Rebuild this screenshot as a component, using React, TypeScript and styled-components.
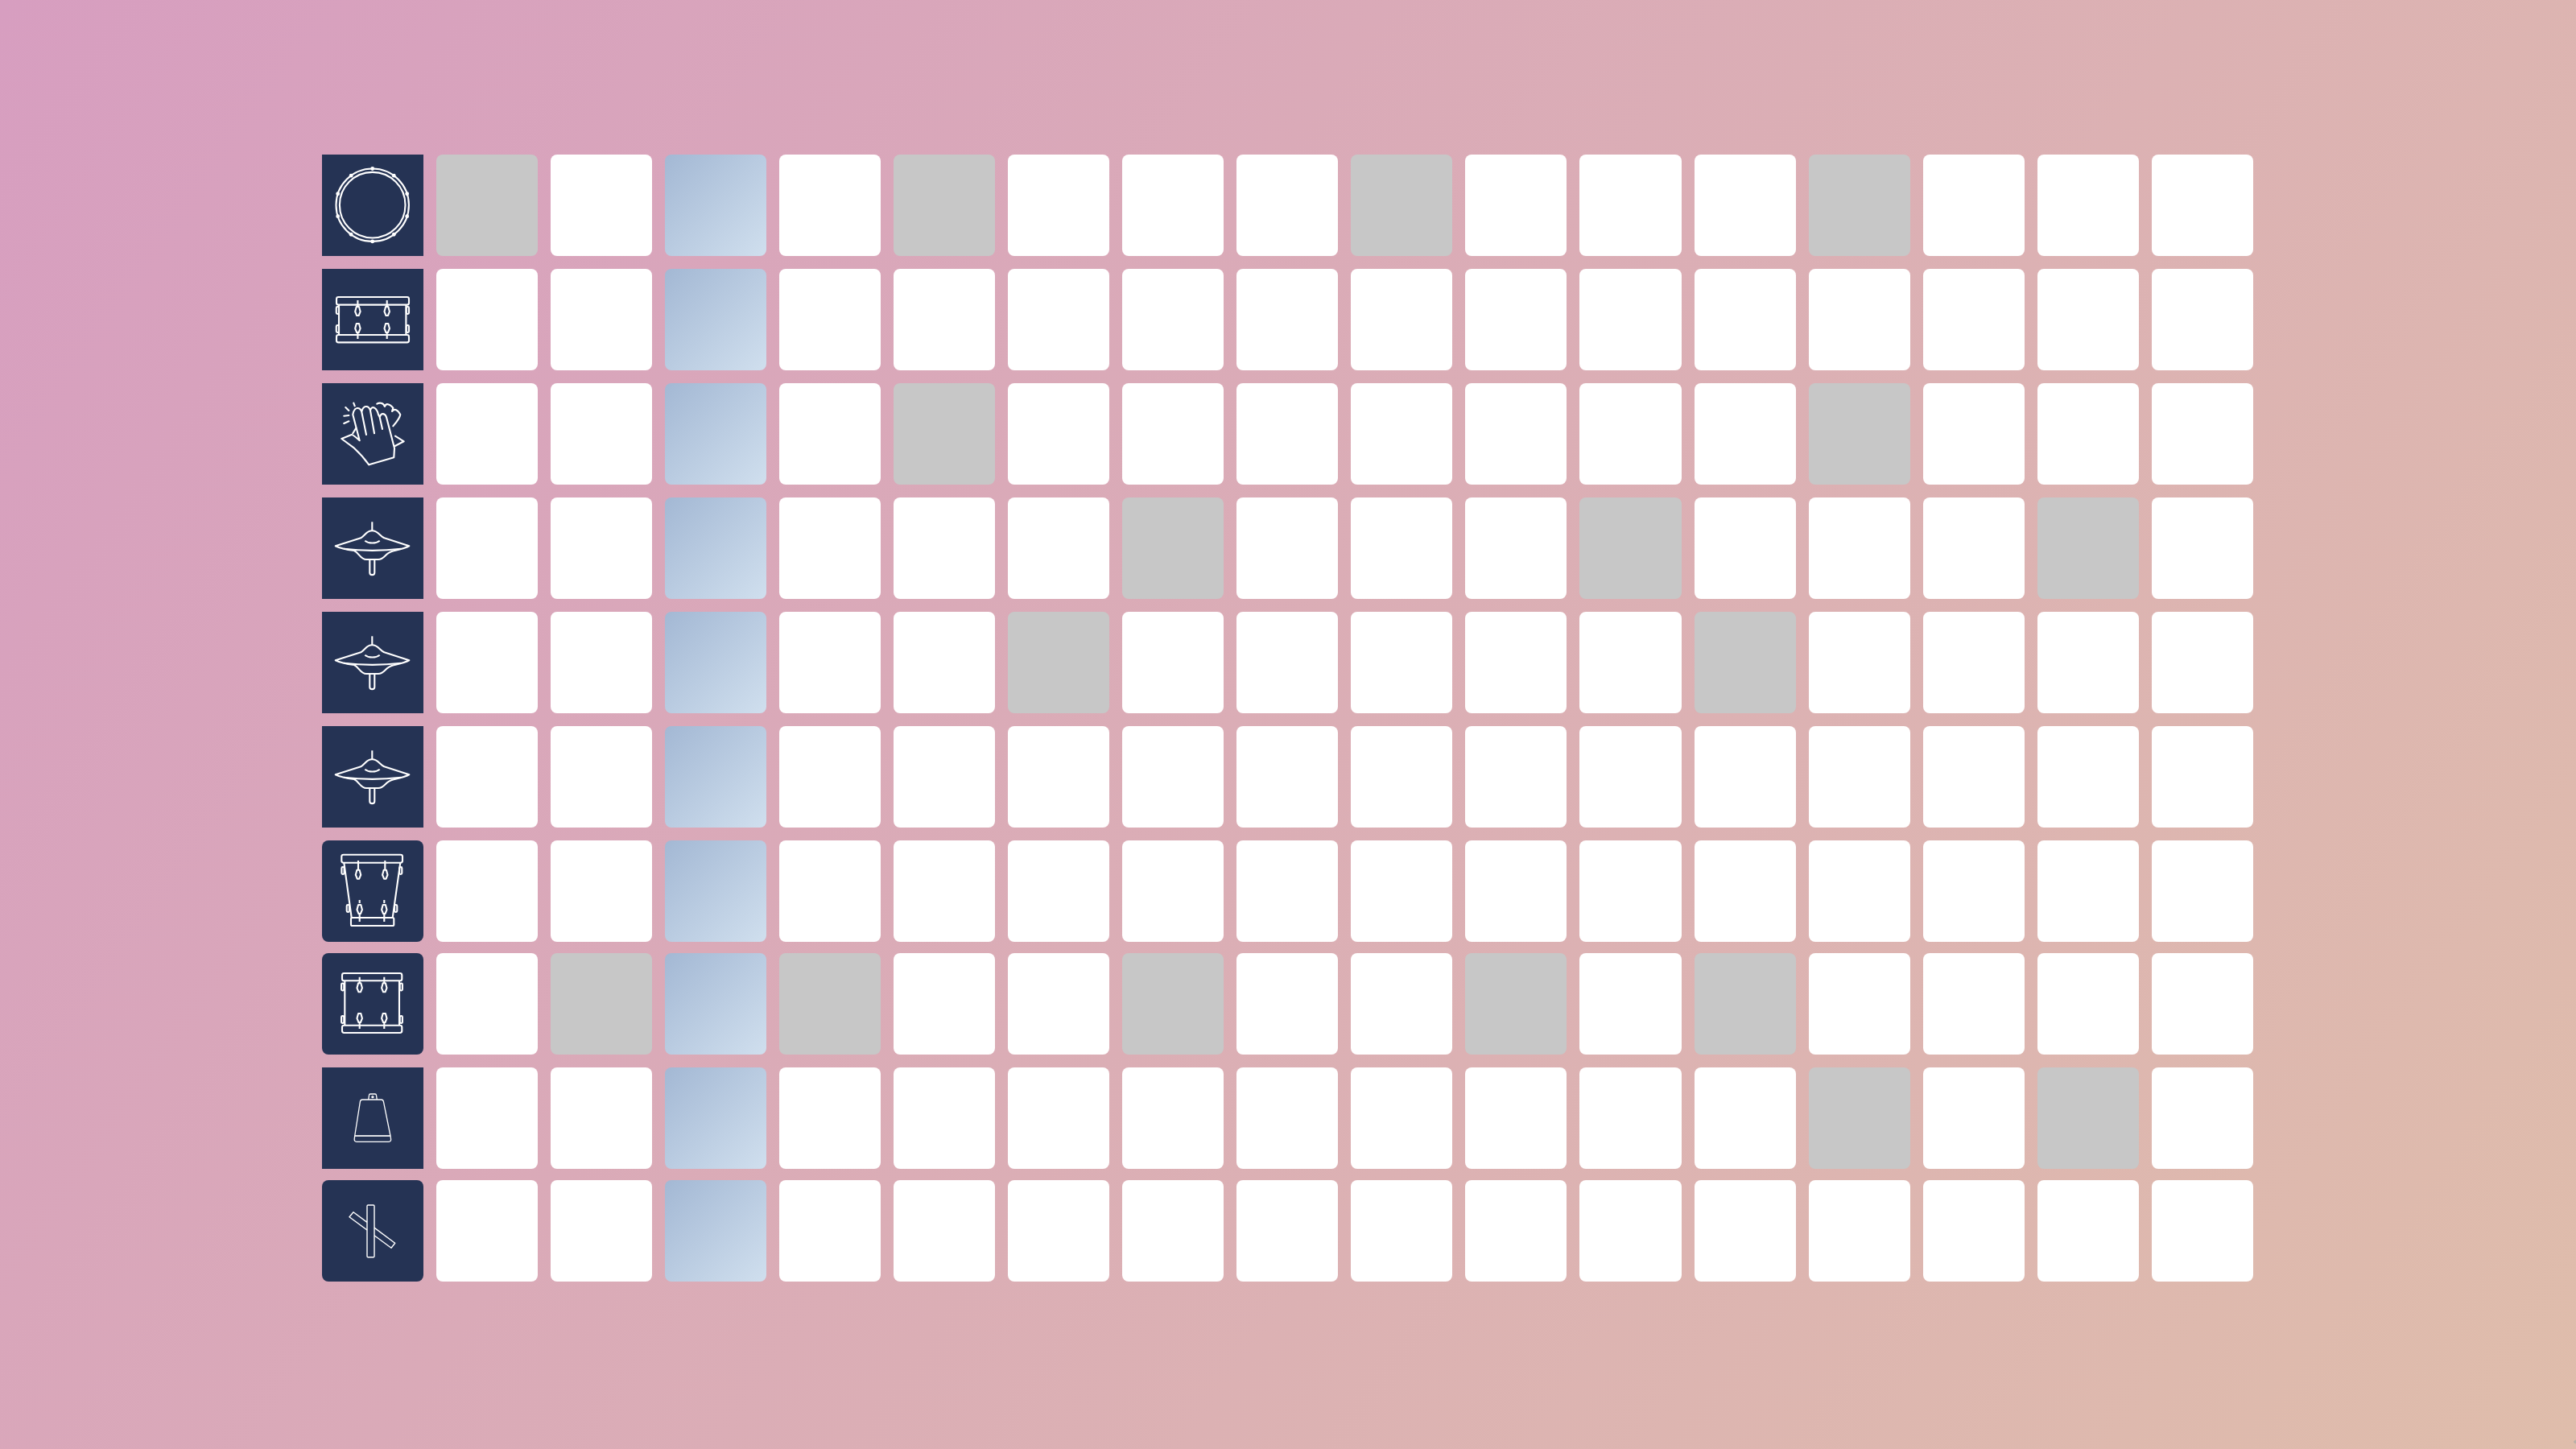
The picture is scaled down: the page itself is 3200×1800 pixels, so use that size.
import React from 'react';
import styled, {createGlobalStyle} from 'styled-components';

const GlobalStyle = createGlobalStyle`
  html, body {
    margin: 0;
    padding: 0;
  }
`;

type IconName = 'snareTop' | 'snare' | 'clap' | 'cymbal' | 'floorTom' | 'rackTom' | 'cowbell' | 'sticks';

interface Track {
  icon: IconName;
  hits: number[];
  rounded?: boolean;
  tight?: boolean;
}

const PLAYHEAD = 2;
const STEPS = Array.from({length: 16}, (_, i) => i);

const TRACKS: Track[] = [
  {icon: 'snareTop', hits: [0, 4, 8, 12]},
  {icon: 'snare', hits: []},
  {icon: 'clap', hits: [4, 12]},
  {icon: 'cymbal', hits: [6, 10, 14]},
  {icon: 'cymbal', hits: [5, 11]},
  {icon: 'cymbal', hits: []},
  {icon: 'floorTom', hits: [], rounded: true},
  {icon: 'rackTom', hits: [1, 3, 6, 9, 11], rounded: true, tight: true},
  {icon: 'cowbell', hits: [12, 14]},
  {icon: 'sticks', hits: [], rounded: true, tight: true},
];

const Lug = ({x, y, h = 11}: {x: number; y: number; h?: number}) => (
  <path d={`M${x - 1.6} ${y}h3.2l1.6 ${h * 0.55}-2 ${h * 0.45}h-2.4l-2-${h * 0.45}z`} strokeLinejoin="round" />
);

const SideLug = ({x, y}: {x: number; y: number}) => (
  <rect x={x - 1.6} y={y} width={3.2} height={9} rx={1.4} />
);

const SNARE_LUGS = [-90, -54, -18, 18, 54, 90, 126, 162, 198, 234];

const icons: Record<IconName, React.ReactNode> = {
  snareTop: (
    <>
      <circle cx="62.7" cy="62.7" r="45.2" />
      <circle cx="62.7" cy="62.7" r="40.8" />
      {SNARE_LUGS.map((a) => (
        <circle
          key={a}
          className="solid"
          cx={62.7 + 45.2 * Math.cos((a * Math.PI) / 180)}
          cy={62.7 + 45.2 * Math.sin((a * Math.PI) / 180)}
          r="2.4"
        />
      ))}
    </>
  ),
  snare: (
    <>
      <rect x="18" y="35" width="90" height="9.6" rx="2.4" />
      <rect x="18" y="82" width="90" height="9.4" rx="2.4" />
      <path d="M21 44.6V82M104.4 44.6V82" />
      <path d="M44.4 39v8M80.7 39v8M44.4 79v8M80.7 79v8" />
      <Lug x={44.4} y={47} />
      <Lug x={80.7} y={47} />
      <Lug x={44.4} y={68} />
      <Lug x={80.7} y={68} />
      <SideLug x={19.4} y={47} />
      <SideLug x={106.4} y={47} />
      <SideLug x={19.4} y={70} />
      <SideLug x={106.4} y={70} />
    </>
  ),
  clap: (
    <>
      <path
        d="M58.3 101.3 89.3 92.3 90 80.7 80 42.3C78.6 37.5 73.5 36 71.7 42.3L75 57M71.7 42.3 70 39C68 30 61.5 27 60 34L65 62.3M60 34C58 27 51 27 49.3 35.7L55 64M49.3 35.7C47 29 40 29 38.3 39L46.7 71.3C41 66 38 63.5 36.7 64L24.3 69 40 80.7C47 87 53 94 58.3 101.3"
        strokeLinejoin="round"
        strokeLinecap="round"
      />
      <path
        d="M68.3 25.7C71 24 76 24 78 29C79 25 84 25 88.3 30.7L87 35C90 31 94 33 97.3 39C96.5 44 92 49 88.3 53.3M91 65.7 101.7 72.3 90.7 78M42.3 55.7 38.3 62.3"
        strokeLinecap="round"
        strokeLinejoin="round"
      />
      <path d="M29.3 30l4 4M39.3 24.7l1.4 3.6M27.3 40.7l6-.7M27.3 50l6-2.7" strokeLinecap="round" />
    </>
  ),
  cymbal: (
    <>
      <path d="M62.3 30.3V41.3" />
      <path
        d="M16.7 60.3 48.3 50.3C54 47 55 41.3 62.3 41.3S71 47 77.3 50.3L108.3 60.3C101 64 94 65 86.7 67 79 69 77 77 70 77H55C48 77 46 69 40 66 32 65 24 64 16.7 60.3Z"
        strokeLinejoin="round"
      />
      <path d="M27 63.7C50 66.5 75 66.5 98.3 63.7" />
      <path d="M53.3 53.7C58 57.5 67 57.5 71.7 53.7" />
      <path d="M59.3 77.5V93.5C59.3 97 65.3 97 65.3 93.5V77.5" />
    </>
  ),
  floorTom: (
    <>
      <rect x="24.3" y="17.7" width="75.7" height="10" rx="2.4" />
      <rect x="36" y="96" width="53.3" height="10" rx="1.6" />
      <path d="M27.3 27.7 36.7 96M97.3 27.7 87.7 96" />
      <path d="M45 25v11.7M78.3 25v11.7M46.7 74v4M77.3 74v4M46.7 91.7V101M77.3 91.7V101" />
      <Lug x={45} y={36.7} />
      <Lug x={78.3} y={36.7} />
      <Lug x={46.7} y={80} />
      <Lug x={77.3} y={80} />
      <SideLug x={26} y={33} />
      <SideLug x={97.7} y={33} />
      <SideLug x={32.3} y={80} />
      <SideLug x={91.7} y={80} />
    </>
  ),
  rackTom: (
    <>
      <rect x="25" y="25" width="74.3" height="9.3" rx="2.4" />
      <rect x="25" y="89.7" width="74.3" height="9.3" rx="2.4" />
      <path d="M28.3 34.3V89.7M96 34.3V89.7" />
      <path d="M46.7 29.7v7.6M77.3 29.7v7.6M46.7 86v8M77.3 86v8" />
      <Lug x={46.7} y={37.3} />
      <Lug x={77.3} y={37.3} />
      <Lug x={46.7} y={75} />
      <Lug x={77.3} y={75} />
      <SideLug x={25.7} y={37.5} />
      <SideLug x={98.3} y={37.5} />
      <SideLug x={25.7} y={78} />
      <SideLug x={98.3} y={78} />
    </>
  ),
  cowbell: (
    <g strokeWidth="1.3">
      <path d="M57.7 40 58.6 34.2C58.7 33.4 59.2 33 60 33H66C66.8 33 67.3 33.4 67.4 34.2L68.3 40" />
      <circle cx="62.9" cy="36.7" r="1" />
      <path
        d="M40.7 85 47.4 42.4C47.7 40.8 48.6 40 50.2 40H73.6C75.2 40 76.1 40.8 76.4 42.4L85 85 85.6 89C85.9 91 84.9 92.3 83 92.3H43C41 92.3 40 91 40.2 89Z"
        strokeLinejoin="round"
      />
      <path d="M41 85H85" strokeWidth="2" opacity="0.85" />
    </g>
  ),
  sticks: (
    <g strokeWidth="1.4" strokeLinejoin="round">
      <rect x="56" y="31" width="9" height="64.7" rx="1.2" />
      <path d="M56 52.4 39 39.7 34 45.7 56 62M65 59.1 90.7 78.3 86 84.3 65 68.7" />
    </g>
  ),
};

const App = () => (
  <Page>
    <GlobalStyle />
    <Board>
      {TRACKS.map((track, row) => (
        <Row key={row} $tight={track.tight}>
          <TrackIcon $rounded={track.rounded}>
            <IconSvg viewBox="0 0 126 126">{icons[track.icon]}</IconSvg>
          </TrackIcon>
          {STEPS.map((step) => (
            <Step key={step} $hit={track.hits.includes(step)} $current={step === PLAYHEAD} />
          ))}
        </Row>
      ))}
    </Board>
    <CornerMark />
  </Page>
);

export default App;

const Page = styled.div`
  position: relative;
  box-sizing: border-box;
  width: 3200px;
  height: 1800px;
  padding: 192px 0 0 400px;
  overflow: hidden;
  background: linear-gradient(125deg, #d79ec0 0%, #dfbdab 100%);
`;

const Board = styled.div`
  display: flex;
  flex-direction: column;
`;

const Row = styled.div<{$tight?: boolean}>`
  display: flex;
  gap: 16px;
  margin-top: ${(props) => (props.$tight ? '14px' : '16px')};

  &:first-child {
    margin-top: 0;
  }
`;

const TrackIcon = styled.div<{$rounded?: boolean}>`
  flex: none;
  width: 126px;
  height: 126px;
  background: #253354;
  border-radius: ${(props) => (props.$rounded ? '8px' : '0')};
`;

const IconSvg = styled.svg`
  display: block;
  width: 126px;
  height: 126px;
  fill: none;
  stroke: #fff;
  stroke-width: 2.1;

  .solid {
    fill: #fff;
    stroke: none;
  }
`;

const Step = styled.div<{$hit: boolean; $current: boolean}>`
  flex: none;
  width: 126.05px;
  height: 126px;
  border-radius: 8px;
  background: ${(props) =>
    props.$current
      ? 'linear-gradient(135deg, #a3b8d4 0%, #d0dfee 100%)'
      : props.$hit
        ? '#c7c7c7'
        : '#fff'};
`;

const CornerMark = styled.div`
  position: absolute;
  right: -11px;
  bottom: 6px;
  width: 14px;
  height: 6px;
  border-radius: 50%;
  background: #b9b0a8;
`;
